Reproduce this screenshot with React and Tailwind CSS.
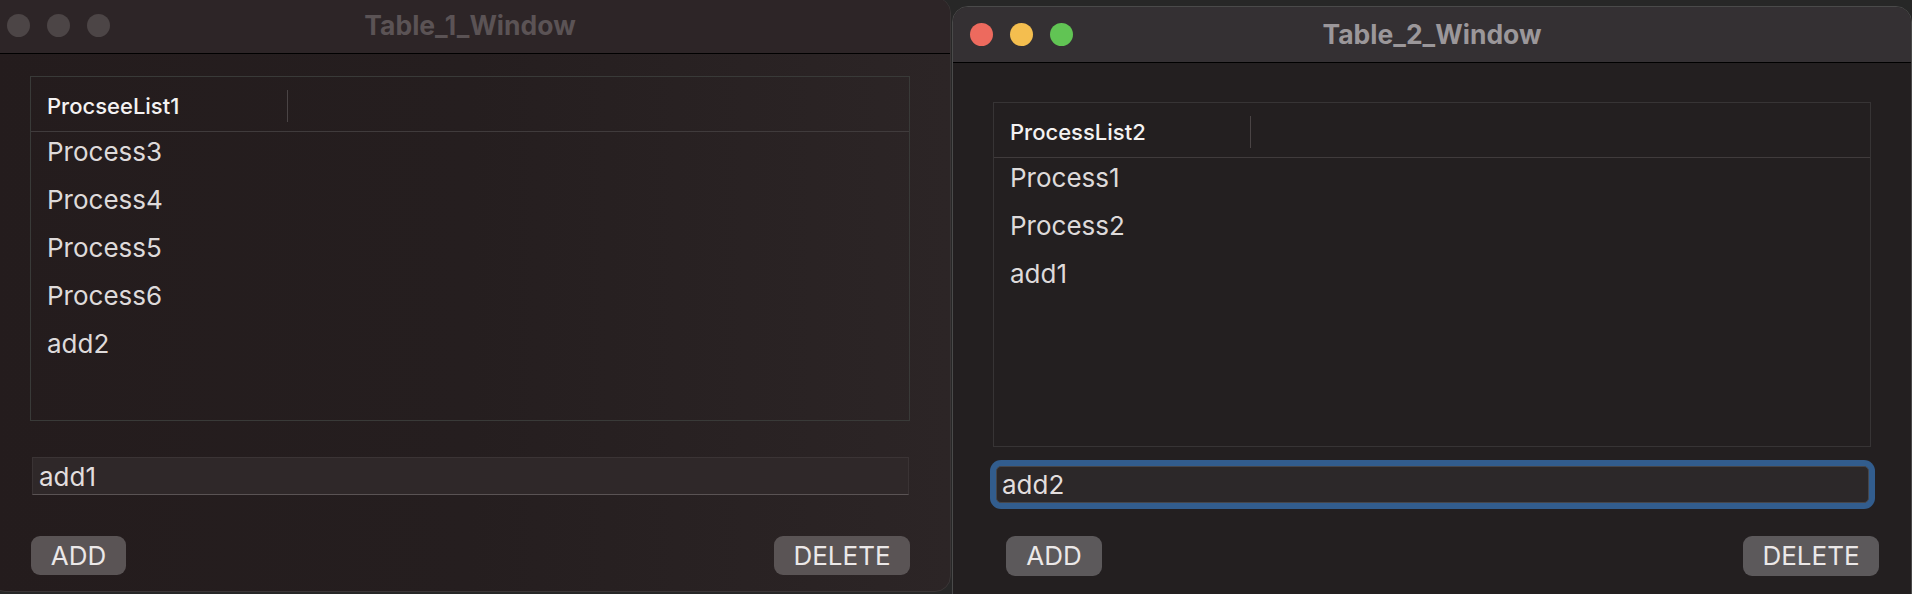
import React from 'react';

const FONT = { fontFamily: 'Inter, "Liberation Sans", sans-serif' };

// traffic light buttons, gray when the window is not focused
const Lights = ({ active }) => (
  <div className="absolute left-[17px] top-0 h-full flex items-center gap-[17px]">
    <span className={`w-[23px] h-[23px] rounded-full ${active ? 'bg-[#ed6a5e]' : 'bg-[#4c4546]'}`}></span>
    <span className={`w-[23px] h-[23px] rounded-full ${active ? 'bg-[#f4be4f]' : 'bg-[#4c4546]'}`}></span>
    <span className={`w-[23px] h-[23px] rounded-full ${active ? 'bg-[#61c454]' : 'bg-[#4c4546]'}`}></span>
  </div>
);

const ProcessTable = ({ title, rows, border }) => (
  <div className={`h-[345px] border ${border} flex flex-col`}>
    <div className="h-[55px] flex items-center border-b border-[#403b3c] shrink-0">
      <div className="w-[256px] pl-[16px] text-[22px] font-medium text-[#f4f2f2] pt-[5px]">{title}</div>
      <div className="w-px h-[32px] bg-[#4a4445] mt-[4px]"></div>
    </div>
    <div className="flex flex-col mt-[1px]">
      {rows.map((r) => (
        <div key={r} className="h-[48px] leading-[38px] pl-[16px] text-[26px] text-[#dedada]">{r}</div>
      ))}
    </div>
  </div>
);

const Window1 = () => (
  <div className="absolute left-[-11px] top-[-3px] w-[962px] h-[595px] rounded-[16px] overflow-hidden border border-[#3a3536] bg-gradient-to-r from-[#241c1d] via-[#251e1f] to-[#2c2526]" style={FONT}>
    <div className="relative h-[56px] bg-[#2d2527] border-b border-black flex items-center justify-center">
      <Lights active={false} />
      <span className="text-[26.5px] font-bold text-[#5b5355]">Table_1_Window</span>
    </div>
    <div className="px-[40px] pt-[22px]">
      <ProcessTable
        title="ProcseeList1"
        rows={['Process3', 'Process4', 'Process5', 'Process6', 'add2']}
        border="border-[#393a38]"
      />
      <div className="mt-[36px] ml-[2px] mr-[1px] h-[38px] bg-[#2f2829] border-t border-[#3b3435] border-b border-b-[#5a5354] border-x border-x-[#3a3334] flex items-center pl-[6px] text-[26px] text-[#e2dede]">
        add1
      </div>
      <div className="mt-[41px] flex justify-between items-center pl-[1px]">
        <button className="w-[95px] h-[39px] rounded-[9px] bg-[#5a5455] text-[26px] text-[#ebe8e8] leading-none">ADD</button>
        <button className="w-[136px] h-[39px] rounded-[9px] bg-[#5a5455] text-[26px] text-[#ebe8e8] leading-none">DELETE</button>
      </div>
    </div>
  </div>
);

const Window2 = () => (
  <div className="absolute left-[952px] top-[6px] w-[960px] h-[600px] rounded-t-[16px] overflow-hidden border border-[#4a4a4a] bg-[#231f20]" style={FONT}>
    <div className="relative h-[56px] bg-[#343033] border-b border-black flex items-center justify-center">
      <Lights active={true} />
      <span className="text-[26.5px] font-bold text-[#9b979a]">Table_2_Window</span>
    </div>
    <div className="px-[40px] pt-[39px]">
      <ProcessTable
        title="ProcessList2"
        rows={['Process1', 'Process2', 'add1']}
        border="border-[#373435]"
      />
      <div className="mt-[19px] ml-[3px] mr-[2px] rounded-[5px] ring-[6px] ring-[#325d8e] h-[37px] bg-[#2c2829] border border-[#46464a] flex items-center pl-[5px] text-[26px] text-[#e2dede]">
        add2
      </div>
      <div className="mt-[33px] flex justify-between items-center pl-[13px] pr-0">
        <button className="w-[96px] h-[40px] rounded-[9px] bg-[#5c595b] text-[26px] text-[#ebe8e8] leading-none">ADD</button>
        <button className="w-[136px] h-[40px] rounded-[9px] bg-[#5c595b] text-[26px] text-[#ebe8e8] leading-none -mr-[8px]">DELETE</button>
      </div>
    </div>
  </div>
);

export default function App() {
  return (
    <div className="relative w-[1912px] h-[594px] overflow-hidden bg-[#272727]">
      <Window1 />
      <Window2 />
    </div>
  );
}
